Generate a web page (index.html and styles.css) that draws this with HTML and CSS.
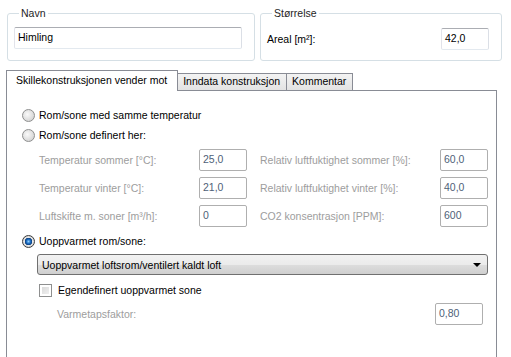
FILE: index.html
```html
<!DOCTYPE html>
<html lang="no">
<head>
    <meta charset="UTF-8">
    <title>Himling</title>
    <link rel="stylesheet" href="styles.css">
</head>
<body>
    <div class="top">
        <fieldset class="group navn">
            <legend>Navn</legend>
            <div class="box name-box">Himling</div>
        </fieldset>
        <fieldset class="group size">
            <legend>Størrelse</legend>
            <div class="size-row">
                <span>Areal [m²]:</span>
                <div class="box num">42,0</div>
            </div>
        </fieldset>
    </div>

    <div class="tabs">
        <div class="tab active">Skillekonstruksjonen vender mot</div>
        <div class="tab">Inndata konstruksjon</div>
        <div class="tab">Kommentar</div>
    </div>

    <div class="panel">
        <div class="radio-row"><span class="radio"></span>Rom/sone med samme temperatur</div>
        <div class="radio-row"><span class="radio"></span>Rom/sone definert her:</div>

        <div class="fields">
            <span class="lbl">Temperatur sommer [°C]:</span>
            <div class="box num off">25,0</div>
            <span class="lbl right">Relativ luftfuktighet sommer [%]:</span>
            <div class="box num off">60,0</div>

            <span class="lbl">Temperatur vinter [°C]:</span>
            <div class="box num off">21,0</div>
            <span class="lbl right">Relativ luftfuktighet vinter [%]:</span>
            <div class="box num off">40,0</div>

            <span class="lbl">Luftskifte m. soner [m³/h]:</span>
            <div class="box num off">0</div>
            <span class="lbl right">CO2 konsentrasjon [PPM]:</span>
            <div class="box num off">600</div>
        </div>

        <div class="radio-row third"><span class="radio on"></span>Uoppvarmet rom/sone:</div>

        <div class="combo">
            <span>Uoppvarmet loftsrom/ventilert kaldt loft</span>
            <span class="arrow"></span>
        </div>

        <div class="check-row"><span class="check"></span>Egendefinert uoppvarmet sone</div>

        <div class="factor-row">
            <span class="lbl">Varmetapsfaktor:</span>
            <div class="box num off">0,80</div>
        </div>
    </div>
</body>
</html>
```

FILE: styles.css
```css
html{
    overflow: hidden;
}

body{
    margin: 0;
    background: #fff;
    font-family: "Liberation Sans", Arial, sans-serif;
    font-size: 10.5px;
    color: #000;
}

/* group boxes at the top */
.top{
    display: flex;
    gap: 5px;
    padding: 7px 0 0 7px;
}

.group{
    margin: 0;
    padding: 7px 12px 10px 6px;
    border: 1px solid #d5dfe5;
    border-radius: 3px;
    box-sizing: border-box;
}

.group legend{
    padding: 0 2px;
    margin-left: 5px;
    line-height: 13px;
    color: #1e1e1e;
}

.navn{ width: 245px; }
.size{ width: 242px; }

.box{
    box-sizing: border-box;
    height: 22px;
    border: 1px solid #abadb3;
    border-color: #abadb3 #dbdfe6 #e3e9ef #e2e3ea;
    border-radius: 2px;
    padding: 3px 3px 0;
    background: #fff;
}

.name-box{ width: 228px; }

.num{ width: 48px; }

.off{
    border-color: #afafaf;
    color: #4f5f78;
}

.size-row{
    display: flex;
    justify-content: space-between;
    align-items: center;
    padding-top: 1px;
}

/* tabs */
.tabs{
    display: flex;
    align-items: flex-end;
    margin: 9px 0 0 6px;
    height: 20px;
}

.tab{
    box-sizing: border-box;
    height: 17px;
    padding: 1px 6px 0 5px;
    border: 1px solid #898c95;
    border-bottom: none;
    background: linear-gradient(#f3f3f3, #e3e3e3);
    margin-left: -1px;
}

.tab.active{
    height: 21px;
    padding: 3px 10px 0 9px;
    background: #fff;
    margin: 0 0 -1px 0;
    position: relative;
    z-index: 1;
}

/* tab page */
.panel{
    box-sizing: border-box;
    width: 491px;
    height: 290px;
    margin-left: 6px;
    border: 1px solid #898c95;
    padding: 14px 0 0 15px;
}

.radio-row{
    display: flex;
    align-items: center;
    gap: 4px;
    height: 20px;
}

.radio{
    box-sizing: border-box;
    width: 13px;
    height: 13px;
    border-radius: 50%;
    border: 1px solid #8e8f8f;
    background: radial-gradient(circle at 40% 40%, #fafafa, #d8d8d8 70%, #c4c4c4);
}

.radio.on{
    border-color: #3c3c3c;
    background: radial-gradient(circle, #8fd0ff 0, #1e6fc4 2px, #0c3f7f 3.5px, #e8e8e8 4px, #cfcfcf 6px);
}

.fields{
    display: grid;
    grid-template-columns: 160px 48px 193px 48px;
    grid-auto-rows: 22px;
    row-gap: 6px;
    align-items: center;
    margin: 4px 0 0 17px;
}

.lbl{ color: #9d9d9d; }
.lbl.right{ padding-left: 13px; }

.third{ margin-top: 4px; }

.combo{
    box-sizing: border-box;
    display: flex;
    align-items: center;
    justify-content: space-between;
    width: 451px;
    height: 21px;
    margin: 3px 0 0 15px;
    padding: 0 6px 0 4px;
    border: 1px solid #707070;
    border-radius: 3px;
    background: linear-gradient(#f2f2f2 0, #ebebeb 50%, #dddddd 51%, #cfcfcf 100%);
}

.arrow{
    width: 0;
    height: 0;
    border-left: 4px solid transparent;
    border-right: 4px solid transparent;
    border-top: 4px solid #000;
}

.check-row{
    display: flex;
    align-items: center;
    gap: 6px;
    height: 20px;
    margin: 5px 0 0 17px;
}

.check{
    box-sizing: border-box;
    width: 13px;
    height: 13px;
    border: 1px solid #8e8f8f;
    background: linear-gradient(135deg, #d4d4d4, #f5f5f5);
    box-shadow: inset 0 0 0 2px #fff;
}

.factor-row{
    display: flex;
    justify-content: space-between;
    align-items: center;
    width: 426px;
    margin: 3px 0 0 35px;
}
```
